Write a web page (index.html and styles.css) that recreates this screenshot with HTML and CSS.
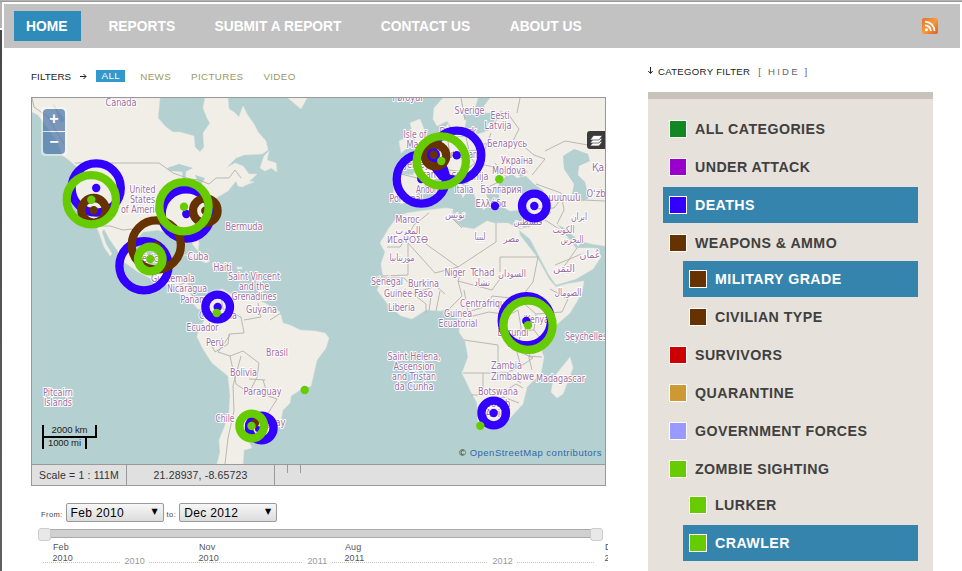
FILE: index.html
```html
<!DOCTYPE html>
<html lang="en">
<head>
<meta charset="utf-8">
<title>Incident map</title>
<link rel="stylesheet" href="styles.css">
</head>
<body>
<div class="page">
  <header class="nav">
    <nav class="nav-links">
      <a class="active">HOME</a><a>REPORTS</a><a>SUBMIT A REPORT</a><a>CONTACT US</a><a>ABOUT US</a>
    </nav>
    <svg class="rss" width="16" height="16" viewBox="0 0 16 16">
      <defs><linearGradient id="rg" x1="0" y1="0" x2="1" y2="1"><stop offset="0" stop-color="#e27233"/><stop offset=".5" stop-color="#f99a3c"/><stop offset="1" stop-color="#dc5f24"/></linearGradient></defs>
      <rect width="16" height="16" rx="2" fill="url(#rg)"/>
      <circle cx="4.4" cy="11.7" r="1.5" fill="#fff"/>
      <path d="M3 7.3a5.8 5.8 0 0 1 5.8 5.8M3 3.6a9.5 9.5 0 0 1 9.5 9.5" fill="none" stroke="#fff" stroke-width="1.8"/>
    </svg>
  </header>
  <div class="columns">
    <main class="main">
      <div class="filters">
        <span class="filters-title">FILTERS</span>
        <svg class="arrow" width="7" height="7" viewBox="0 0 7 7"><path d="M0 3.5h6M3.500 1l2.500 2.500L3.500 6" fill="none" stroke="#222"/></svg>
        <a class="on">ALL</a><a>NEWS</a><a>PICTURES</a><a>VIDEO</a>
      </div>
      <section class="map">
        <svg class="map-canvas" width="573" height="366" viewBox="32 98 573 366">
          <rect x="32" y="98" width="573" height="366" fill="#b5d0d0"/>
          <g class="land">
            <path d="M32 98V112L38 115 44 123 52 134 58 143 62 155 70 161 77 167 73 176 72 186 74 200 80 210 88 220 97 228 101 238 104 247 110 256 112 254 106 244 102 232 104 229 110 240 117 250 124 262 138 272 150 278 164 283 176 292 190 300 198 309 205 310 206 318 199 328 197 337 203 349 212 363 228 376 230 395 229 413 224 428 219 440 220 452 217 464H243L244 450 252 448 249 442 262 442 274 436 280 424 283 410 290 403 291 396 300 390 311 386 317 360 326 348 329 338 325 333 315 331 300 330 290 325 283 323 280 312 265 303 250 297 233 295 222 289 211 291 205 300 194 299 188 291 187 280 176 278 166 274 169 258 162 257 157 266 149 270 141 262 136 249 137 239 143 232 158 230 170 234 178 230 188 233 193 245 198 251 199 243 194 230 202 218 215 207 216 198 228 191 236 181 238 186 243 187 257 174 249 174 243 166 235 163 226 168 236 158 244 155 262 154 268 150 266 141 258 132 254 124 247 114 243 106 239 117 234 112 229 109 228 98H205L203 108 207 118 210 123 203 133 204 147 200 152 195 147 194 136 180 132 173 132 166 127 158 118 160 98Z"/>
            <path d="M260 168L264 156 269 151 267 160 276 163 277 172 271 168 265 171ZM288 98L301 109 307 98ZM243 184l5-3 6 1-11 4ZM184 255l12-1 14 7-4 2-14-6ZM212 263l11 1 6 4-16 1ZM237 267h5v2h-5Z"/>
            <path d="M443 98L434 108 433 119 437 126 447 121 451 127 455 138 464 131 466 121 463 115 474 111 478 98ZM490 98L484 106 486 113 505 112 500 120 490 119 485 132 468 137 452 137 448 124 443 130 444 138 432 146 421 157 411 158 417 167 413 175 396 174 394 182 393 199 402 204 414 198 421 188 436 178 446 176 460 190 463 198 467 190 456 177 454 171 463 177 472 189 477 202 484 210 489 202 486 194 499 194 500 205 510 211 529 209 533 217 528 227 520 229 508 223 494 223 487 221 474 229 462 227 452 219 453 209 446 208 420 211 407 213 398 216 389 228 380 243 385 252 381 264 383 277 377 290 389 306 401 316 412 319 426 310 441 311 449 308 461 318 459 332 465 341 468 357 462 373 470 390 477 403 478 423 486 428 507 421 523 404 527 387 541 373 544 357 540 347 547 333 570 313 582 293 584 281 566 284 556 287 549 279 537 257 520 235 519 230 530 239 549 275 556 285 576 279 593 269 601 257 595 248 588 248 576 248 565 234 557 224 566 229 579 241 592 244 605 246V98Z"/>
            <path d="M410 123L420 119 424 129 430 145 426 154 412 158 416 146 414 138ZM399 141L409 136 410 146 401 153ZM570 357L573 368 563 394 557 398 551 392 554 377Z"/>
          </g>
          <g fill="#b5d0d0">
            <path d="M497 192L500 180 512 174 517 178 526 176 534 184 544 191 535 197 518 193 507 194ZM517 174l8-5 3 3-7 5ZM563 156L574 149 588 154 590 161 579 166 578 175 585 182 589 198 580 202 572 194 574 184 564 169ZM167 168l12-4 14 4-8 4-15-1ZM182 172l4 0-2 15ZM195 175l10 3-5 9ZM53 104l12 16-4 3Z"/>
            <path d="M524 315h5l2 7-5 2ZM485 118h12v5h-12Z"/>
          </g>
          <g class="borders">
            <path d="M75 163H159L173 173 190 179 199 180 209 184 216 178 229 178 235 170 241 178M97 226l13 0 13 4 9-1 8 12M32 98l2 9 14 10 8 14 8 13M163 280l6-11M174 287l13-5M191 299l3-7"/>
            <path d="M220 291l3 18 18 8 3 16-15 1-1 10-13 8-4-8M230 335l-12 17 12 4 13-5 16 12-2 14-8 16-13-9-6-28M263 380l5 16 9 3-10 16 2 11M241 356l-8 30 1 25-6 27-3 26M244 320l17-3-3-14M270 320l11-7M249 379l16 1"/>
            <path d="M397 173l28 7M436 176l10-17-12-11M448 140l2 18 16-6 9 11-11 9-15-2M466 137l3 14 16-2 6-16M485 130l21-2-5-17M506 111l13 18-6 12-29 3M516 140l18 15 11 4-13 16M480 164l14 3 7 14-15 7-11-12M495 163l13 16M536 184l25 9 3 17-7 14M532 209l22-1 9-12M528 227l16-8 7-7M545 220l22 14M583 200l22 1M545 151l20-10 23 4 17-13M461 98l4 22M520 98l-3 15"/>
            <path d="M387 247h13l14-22M414 225l15-12M412 234l46 33 38-25V223M458 267l-23 6-27-30v32l-26 1M462 228l-10-10M500 257h38M500 257v22l-8 11-34-9 4-11M538 257l-5 25-13 17-28-3-5 10-19 6-4-22M383 278l21 0 14 14 18-6 9 8M396 298l15-6 15 12v9M431 296l-2 15M440 291l-4 20M458 281l4 15-13 13M462 317l11-1 16-4 20 3 9-5 3 17-3 24 15 7-15 10-20-2V345l-34-5M520 300l16 14 26-2 6-13-18-10M536 314l-2 16 9 12M518 331l16-1M518 343l10 13 14 1M463 373h42l16-6-4-15M483 373v22l-12 0M483 390l16 5 17-11 7 4M478 413l25-16 16 6M505 373l16 10M532 341l-3 17 3 12M555 265l29-12M577 248l-16 23"/>
          </g>
          <g class="labels">
            <text x="121" y="105.500" textLength="31" lengthAdjust="spacingAndGlyphs">Canada</text>
            <text x="142.500" y="192.500" textLength="26" lengthAdjust="spacingAndGlyphs">United</text><text x="142.500" y="202.500" textLength="25" lengthAdjust="spacingAndGlyphs">States</text><text x="142.500" y="212.500" textLength="43" lengthAdjust="spacingAndGlyphs">of America</text>
            <text x="149" y="261.500" textLength="28" lengthAdjust="spacingAndGlyphs">México</text><text x="198" y="259.500" textLength="21" lengthAdjust="spacingAndGlyphs">Cuba</text>
            <text x="244" y="229.500" textLength="37" lengthAdjust="spacingAndGlyphs">Bermuda</text><text x="222.500" y="271" textLength="18" lengthAdjust="spacingAndGlyphs">Haiti</text>
            <text x="173" y="281.500" textLength="44" lengthAdjust="spacingAndGlyphs">Guatemala</text><text x="187" y="291.500" textLength="40" lengthAdjust="spacingAndGlyphs">Nicaragua</text><text x="196" y="303" textLength="31" lengthAdjust="spacingAndGlyphs">Panamá</text>
            <text x="254" y="279.500" textLength="52" lengthAdjust="spacingAndGlyphs">Saint Vincent</text><text x="254" y="289.500" textLength="30" lengthAdjust="spacingAndGlyphs">and the</text><text x="254" y="299.500" textLength="45" lengthAdjust="spacingAndGlyphs">Grenadines</text>
            <text x="261.500" y="313" textLength="31" lengthAdjust="spacingAndGlyphs">Guyana</text><text x="218" y="318.500" textLength="38" lengthAdjust="spacingAndGlyphs">Colombia</text><text x="202.500" y="330.500" textLength="32" lengthAdjust="spacingAndGlyphs">Ecuador</text><text x="215" y="346" textLength="18" lengthAdjust="spacingAndGlyphs">Perú</text>
            <text x="277" y="356" textLength="22" lengthAdjust="spacingAndGlyphs">Brasil</text><text x="243.500" y="376" textLength="27" lengthAdjust="spacingAndGlyphs">Bolivia</text><text x="262.500" y="395" textLength="38" lengthAdjust="spacingAndGlyphs">Paraguay</text><text x="225" y="422" textLength="19" lengthAdjust="spacingAndGlyphs">Chile</text><text x="268" y="426" textLength="35" lengthAdjust="spacingAndGlyphs">Uruguay</text>
            <text x="58" y="395.500" textLength="30" lengthAdjust="spacingAndGlyphs">Pitcairn</text><text x="58" y="405.500" textLength="28" lengthAdjust="spacingAndGlyphs">Islands</text>
            <text x="408" y="100.500" textLength="31" lengthAdjust="spacingAndGlyphs">Føroyar</text><text x="469.500" y="114" textLength="30" lengthAdjust="spacingAndGlyphs">Sverige</text><text x="500" y="119" textLength="19" lengthAdjust="spacingAndGlyphs">Eesti</text><text x="498" y="129" textLength="27" lengthAdjust="spacingAndGlyphs">Latvija</text>
            <text x="415" y="137.500" textLength="23" lengthAdjust="spacingAndGlyphs">Isle of</text><text x="415" y="147.500" textLength="17" lengthAdjust="spacingAndGlyphs">Man</text><text x="458" y="135" textLength="37" lengthAdjust="spacingAndGlyphs">Danmark</text><text x="460" y="158" textLength="44" lengthAdjust="spacingAndGlyphs">Deutschland</text><text x="507" y="146.500" textLength="40" lengthAdjust="spacingAndGlyphs">Беларусь</text><text x="517" y="164" textLength="32" lengthAdjust="spacingAndGlyphs">Україна</text><text x="509" y="174" textLength="34" lengthAdjust="spacingAndGlyphs">Moldova</text>
            <text x="417" y="168" textLength="25" lengthAdjust="spacingAndGlyphs">Jersey</text><text x="432" y="178" textLength="27" lengthAdjust="spacingAndGlyphs">France</text><text x="470" y="180" textLength="37" lengthAdjust="spacingAndGlyphs">Slovenija</text><text x="430" y="192.500" textLength="28" lengthAdjust="spacingAndGlyphs">Andorra</text><text x="464" y="192.500" textLength="19" lengthAdjust="spacingAndGlyphs">Italia</text><text x="501" y="192.500" textLength="41" lengthAdjust="spacingAndGlyphs">България</text><text x="406" y="202" textLength="33" lengthAdjust="spacingAndGlyphs">Portugal</text><text x="491" y="206.500" textLength="31" lengthAdjust="spacingAndGlyphs">Ελλάδα</text>
            <text x="563" y="201" textLength="35" lengthAdjust="spacingAndGlyphs">աստան</text><text x="606" y="170.500" textLength="28" lengthAdjust="spacingAndGlyphs">Қазақ</text><text x="601" y="197" textLength="29" lengthAdjust="spacingAndGlyphs">Oʻzbek</text>
            <text x="455" y="217.500" textLength="20" lengthAdjust="spacingAndGlyphs">تونس</text><text x="407.500" y="223" textLength="24" lengthAdjust="spacingAndGlyphs">Maroc</text><text x="408" y="233.500" textLength="25" lengthAdjust="spacingAndGlyphs">المغرب</text><text x="407.500" y="243" textLength="41" lengthAdjust="spacingAndGlyphs">ⵍⵎⴰⵖⵔⵉⴱ</text><text x="402" y="261" textLength="25" lengthAdjust="spacingAndGlyphs">موريتانيا</text>
            <text x="480" y="240" textLength="11" lengthAdjust="spacingAndGlyphs">ليبيا</text><text x="511.500" y="242" textLength="16" lengthAdjust="spacingAndGlyphs">مصر</text><text x="528" y="225" textLength="29" lengthAdjust="spacingAndGlyphs">فلسطين</text><text x="579" y="220" textLength="16" lengthAdjust="spacingAndGlyphs">ایران</text><text x="563.500" y="232.500" textLength="22" lengthAdjust="spacingAndGlyphs">الكويت</text><text x="572" y="242.500" textLength="23" lengthAdjust="spacingAndGlyphs">البحرين</text><text x="590" y="258" textLength="21" lengthAdjust="spacingAndGlyphs">عُمان</text><text x="564" y="272" textLength="22" lengthAdjust="spacingAndGlyphs">اليَمَن</text><text x="512" y="277" textLength="28" lengthAdjust="spacingAndGlyphs">السودان</text><text x="568" y="296" textLength="27" lengthAdjust="spacingAndGlyphs">الصومال</text>
            <text x="455" y="275.500" textLength="21" lengthAdjust="spacingAndGlyphs">Niger</text><text x="482.500" y="275.500" textLength="24" lengthAdjust="spacingAndGlyphs">Tchad</text><text x="482" y="286" textLength="16" lengthAdjust="spacingAndGlyphs">تشاد</text><text x="387" y="285" textLength="32" lengthAdjust="spacingAndGlyphs">Sénégal</text><text x="423.500" y="287" textLength="31" lengthAdjust="spacingAndGlyphs">Burkina</text><text x="398" y="296.500" textLength="28" lengthAdjust="spacingAndGlyphs">Guinée</text><text x="423.500" y="297" textLength="19" lengthAdjust="spacingAndGlyphs">Faso</text><text x="401.500" y="310.500" textLength="27" lengthAdjust="spacingAndGlyphs">Liberia</text>
            <text x="485" y="306.500" textLength="50" lengthAdjust="spacingAndGlyphs">Centrafrique</text><text x="458" y="317" textLength="28" lengthAdjust="spacingAndGlyphs">Guinea</text><text x="458" y="327" textLength="39" lengthAdjust="spacingAndGlyphs">Ecuatorial</text><text x="537" y="322.500" textLength="23" lengthAdjust="spacingAndGlyphs">Kenya</text><text x="513" y="336" textLength="31" lengthAdjust="spacingAndGlyphs">Burundi</text><text x="524" y="346.500" textLength="36" lengthAdjust="spacingAndGlyphs">Tanzania</text><text x="586" y="340" textLength="42" lengthAdjust="spacingAndGlyphs">Seychelles</text>
            <text x="414" y="360" textLength="53" lengthAdjust="spacingAndGlyphs">Saint Helena,</text><text x="414" y="370" textLength="41" lengthAdjust="spacingAndGlyphs">Ascension</text><text x="414" y="380" textLength="44" lengthAdjust="spacingAndGlyphs">and Tristan</text><text x="414" y="390" textLength="39" lengthAdjust="spacingAndGlyphs">da Cunha</text>
            <text x="506.500" y="368.500" textLength="31" lengthAdjust="spacingAndGlyphs">Zambia</text><text x="512.500" y="380" textLength="43" lengthAdjust="spacingAndGlyphs">Zimbabwe</text><text x="560.500" y="381.500" textLength="49" lengthAdjust="spacingAndGlyphs">Madagascar</text><text x="498" y="394.500" textLength="40" lengthAdjust="spacingAndGlyphs">Botswana</text><text x="498" y="407" textLength="25" lengthAdjust="spacingAndGlyphs">South</text><text x="498" y="417" textLength="25" lengthAdjust="spacingAndGlyphs">Africa</text>
          </g>
          <g class="blue">
            <circle cx="96.200" cy="188" r="24.600"/><circle cx="186.300" cy="214" r="24.600"/><circle cx="144" cy="265.700" r="24.600"/><circle cx="421.300" cy="179" r="24.600"/><circle cx="456.700" cy="155.300" r="24.600"/><circle cx="526.300" cy="320.700" r="24.600"/>
            <circle cx="217.700" cy="307" r="12.300"/><circle cx="261.300" cy="428" r="12.300"/><circle cx="534.300" cy="206" r="12.300"/><circle cx="493.700" cy="413" r="12.300"/>
            <path d="M436 163l6 13 10 4"/>
            <g class="dots"><circle cx="96.200" cy="188" r="4.200"/><circle cx="186.300" cy="214" r="4.200"/><circle cx="421.300" cy="179" r="4.200"/><circle cx="456.700" cy="155.300" r="4.200"/><circle cx="526.300" cy="321" r="4.200"/><circle cx="217.700" cy="307" r="4.200"/><circle cx="250" cy="425" r="5"/><circle cx="258" cy="429" r="3"/><circle cx="534.300" cy="206" r="4.200"/><circle cx="493.700" cy="413" r="4.200"/><circle cx="495" cy="206" r="4.200"/></g>
          </g>
          <g class="brown">
            <circle cx="156.300" cy="245" r="24.600"/><circle cx="93.700" cy="210.300" r="12.300"/><circle cx="205.300" cy="210.700" r="12.300"/><circle cx="435.500" cy="155.700" r="10.800"/>
            <g class="dots"><circle cx="156.300" cy="245.500" r="4.200"/><circle cx="93.700" cy="210.300" r="4.200"/><circle cx="205.300" cy="210.700" r="4.200"/><circle class="hub" cx="433.500" cy="154.800" r="6.500"/><circle cx="433.700" cy="154.800" r="4.200"/><circle cx="255" cy="423" r="4.200"/></g>
          </g>
          <g class="green">
            <circle cx="91.300" cy="199.700" r="24.600"/><circle cx="184" cy="206.700" r="24.600"/><circle cx="441.300" cy="161" r="24.600"/><circle cx="528" cy="325.300" r="24.600"/><circle cx="150.300" cy="259" r="12.300"/><circle cx="251.700" cy="426" r="12.300"/>
            <g class="dots"><circle cx="91.300" cy="199.700" r="4.200"/><circle cx="184" cy="206.700" r="4.200"/><circle cx="441.300" cy="161" r="4.200"/><circle cx="528" cy="325.300" r="4.200"/><circle cx="150.300" cy="259" r="4.200"/><circle cx="251.500" cy="426" r="4.200"/><circle cx="216.700" cy="313" r="4.200"/><circle cx="304.700" cy="390" r="4.200"/><circle cx="499.300" cy="179.300" r="4.200"/><circle cx="480.300" cy="425.700" r="4.200"/></g>
          </g>
          <path d="M43 425v24M96 425v13M42 437h55M86 437v12" fill="none" stroke="#000" stroke-width="2"/>
          <g class="scale-text"><text x="51.500" y="433" textLength="36">2000 km</text><text x="48" y="446" textLength="33">1000 mi</text></g>
        </svg>
        <div class="zoomer"><span>+</span><span>−</span></div>
        <div class="layers"><svg width="18" height="18" viewBox="0 0 18 18"><g fill="#fff" stroke="#3a3a3a" stroke-width=".7"><path d="M3 15l3.500-4.500h9L12 15Z"/><path d="M3 12l3.500-4.500h9L12 12Z"/><path d="M3 9l3.500-4.500h9L12 9Z"/></g></svg></div>
        <div class="credit">© <a>OpenStreetMap contributors</a></div>
      </section>
      <div class="status"><span class="scale">Scale = 1 : 111M</span><span class="coords">21.28937, -8.65723</span><span class="ticks"><i></i><i></i></span></div>
      <div class="range">
        <label>From:</label><span class="select">Feb 2010<b>▼</b></span><label>to:</label><span class="select">Dec 2012<b>▼</b></span>
      </div>
      <div class="slider"><i class="handle"></i><i class="track"></i><i class="handle"></i></div>
      <svg class="axis" width="570" height="30" viewBox="38 541 570 30">
        <path d="M43 562.500h77M149 562.500h154M332 562.500h156M517 562.500h77" stroke="#c4c4c4" stroke-dasharray="1 1"/>
        <g class="major"><text x="53" y="550">Feb</text><text x="52.500" y="561">2010</text><text x="199" y="550">Nov</text><text x="198.500" y="561">2010</text><text x="345" y="550">Aug</text><text x="344.500" y="561">2011</text><text x="605" y="550">Dec</text><text x="604.500" y="561">2012</text></g>
        <g class="minor"><text x="124.500" y="564">2010</text><text x="307.500" y="564">2011</text><text x="492.500" y="564">2012</text></g>
      </svg>
    </main>
    <aside class="side">
      <div class="side-title"><svg width="6" height="8" viewBox="0 0 6 8"><path d="M2.500 0v6.500M.300 4l2.200 2.500L4.700 4" fill="none" stroke="#222"/></svg><span>CATEGORY FILTER</span><a>[ HIDE ]</a></div>
      <ul class="cats">
        <li><i class="c-all"></i>ALL CATEGORIES</li>
        <li><i class="c-attack"></i>UNDER ATTACK</li>
        <li class="sel"><i class="c-deaths"></i>DEATHS</li>
        <li class="parent"><i class="c-ammo"></i>WEAPONS &amp; AMMO</li>
        <li class="child sel"><i class="c-ammo"></i>MILITARY GRADE</li>
        <li class="child"><i class="c-ammo"></i>CIVILIAN TYPE</li>
        <li><i class="c-surv"></i>SURVIVORS</li>
        <li><i class="c-quar"></i>QUARANTINE</li>
        <li><i class="c-gov"></i>GOVERNMENT FORCES</li>
        <li class="parent"><i class="c-zombie"></i>ZOMBIE SIGHTING</li>
        <li class="child"><i class="c-zombie"></i>LURKER</li>
        <li class="child sel"><i class="c-zombie"></i>CRAWLER</li>
      </ul>
    </aside>
  </div>
</div>
</body>
</html>
```
FILE: styles.css
```css
* { box-sizing: border-box; }
html { height: 100%; overflow: hidden; }
body {
  margin: 0;
  height: 571px;
  overflow: hidden;
  padding: 2px 0 0 2px;
  font-family: "Liberation Sans", Arial, sans-serif;
  background: linear-gradient(#999, #999) 0 1px / 100% 1px no-repeat,
    linear-gradient(#b3b3b3 0 28px, #fff 28px 30px, #484848 30px, #606060 571px);
}
.page { height: 569px; background: #fff; padding: 2px 2px 0; overflow: hidden; }
.nav {
  height: 44px;
  background: #c2c2c2;
  display: flex;
  justify-content: space-between;
  padding: 7px 22px 0 10px;
}
.nav-links { display: flex; gap: 15.4px; }
.nav-links a {
  height: 30px;
  line-height: 31px;
  padding: 0 12px;
  color: #fff;
  font-size: 13.8px;
  font-weight: bold;
  letter-spacing: 0;
  white-space: nowrap;
}
.nav-links .active { background: #2f8bba; width: 67px; }
.rss { margin-top: 7px; }
.columns { display: flex; }
.main { width: 575px; margin-left: 27px; }

.filters {
  display: flex;
  align-items: center;
  height: 12px;
  margin: 22px 0 15px;
  font-size: 9.8px;
  letter-spacing: .35px;
  color: #222;
}
.filters a { color: #999b66; margin-right: 20px; }
.filters-title { letter-spacing: .1px; }
.arrow { margin: 0 9px 0 9px; }
.filters .on { background: #3399cc; color: #fff; width: 29px; text-align: center; height: 12px; line-height: 12px; margin-right: 15px; }

.map { position: relative; width: 575px; height: 367px; border: 1px solid #999; border-bottom: 0; overflow: hidden; }
.map-canvas { display: block; }
.land { fill: #f1eee8; stroke: #e2e6df; stroke-width: .5; }
.borders { fill: none; stroke: #b3b1ad; stroke-width: .9; stroke-linejoin: round; }
.labels text {
  font: 10px "DejaVu Sans Condensed", "DejaVu Sans", sans-serif;
  text-anchor: middle;
  fill: #9d6ea3;
  stroke: #fff;
  stroke-width: 2px;
  stroke-linejoin: round;
  paint-order: stroke;
}
.blue, .brown, .green { fill: none; stroke-width: 8.3; }
.blue { stroke: #3300ff; }
.brown { stroke: #663300; }
.green { stroke: #66cc00; }
.dots { stroke: none; }
.blue .dots, .dots .hub { fill: #3300ff; }
.brown .dots { fill: #663300; }
.green .dots { fill: #66cc00; }
.scale-text { font-size: 9.5px; fill: #222; }

.zoomer {
  position: absolute;
  left: 9px;
  top: 9px;
  width: 26px;
  padding: 2px;
  border-radius: 4px;
  background: rgba(255, 255, 255, .4);
}
.zoomer span {
  display: block;
  height: 22px;
  background: rgba(0, 60, 136, .5);
  color: #fff;
  font: bold 16px/19px "Liberation Sans", sans-serif;
  text-align: center;
}
.zoomer span:first-child { border-radius: 4px 4px 0 0; margin-bottom: 1px; }
.zoomer span:last-child { border-radius: 0 0 4px 4px; }
.layers {
  position: absolute;
  right: 0;
  top: 33px;
  width: 18px;
  height: 18px;
  background: #3a3a3a;
  border-radius: 3px 0 0 3px;
}
.credit { position: absolute; right: 3px; bottom: 5px; font-size: 9.5px; line-height: 12px; letter-spacing: .5px; color: #222; white-space: nowrap; }
.credit a { color: #3366aa; }

.status {
  display: flex;
  height: 22px;
  border: 1px solid #999;
  background: #e0e0e0;
  font-size: 10.5px;
  letter-spacing: .15px;
  line-height: 20px;
  color: #333;
}
.status span { border-right: 1px solid #999; text-align: center; }
.status .scale { width: 95px; }
.status .coords { width: 148px; }
.status .ticks { display: flex; border: 0; gap: 12px; padding-left: 12px; }
.ticks i { width: 1px; height: 8px; background: #999; }

.range { display: flex; align-items: center; height: 20px; margin: 16px 0 0 10px; font-size: 12px; }
.range label { font-size: 7.5px; letter-spacing: .4px; color: #444; margin: 4px 3px 0 0; white-space: nowrap; }
.select {
  display: flex;
  justify-content: space-between;
  width: 98px;
  height: 19px;
  padding: 0 5px 0 4px;
  margin-right: 3px;
  border: 1px solid #999;
  border-radius: 2px;
  background: linear-gradient(#f7f7f7, #dcdcdc);
  letter-spacing: .35px;
  line-height: 18px;
  color: #000;
}
.select b { font: 8px/16px "DejaVu Sans", sans-serif; letter-spacing: 0; }

.slider { display: flex; width: 565px; height: 13px; margin: 6px 0 0 7px; }
.track { flex: 1; height: 9px; margin: 1px -1px 0; background: #d0d0d0; border: solid #aaa; border-width: 1px 0; }
.handle { width: 13px; height: 13px; background: #e8e8e8; border: 1px solid #ccc; border-radius: 3px; z-index: 1; }
.axis { display: block; margin: 0 0 0 7px; }
.axis text { font-size: 9px; letter-spacing: .1px; fill: #555; }
.axis .minor text { fill: #999; }

.side { width: 285px; margin-left: 42px; }
.side-title { display: flex; align-items: center; height: 12px; margin: 17px 0 15px; font-size: 9.6px; letter-spacing: .3px; color: #222; }
.side-title svg { margin-right: 4px; }
.side-title a { margin-left: 8px; letter-spacing: 2.2px; color: #666; }
.cats {
  list-style: none;
  margin: 0;
  height: 500px;
  padding: 12px 15px;
  background: #e6e2db;
  border-top: 7px solid #c8c2bb;
}
.cats li {
  display: flex;
  align-items: center;
  gap: 8px;
  height: 36px;
  margin-bottom: 2px;
  padding-left: 6px;
  color: #404040;
  font-size: 14.2px;
  font-weight: bold;
  letter-spacing: .45px;
}
.cats .parent { margin-bottom: 0; }
.cats .child { margin-left: 20px; }
.cats .sel { background: #3584ad; color: #fff; }
.cats i { width: 18px; height: 18px; border: 1px solid #fff; }
.c-all { background: #118822; }
.c-attack { background: #9900cc; }
.c-deaths { background: #3300ff; }
.c-ammo { background: #663300; }
.c-surv { background: #cc0000; }
.c-quar { background: #cc9933; }
.c-gov { background: #9999ff; }
.c-zombie { background: #66cc00; }
```
